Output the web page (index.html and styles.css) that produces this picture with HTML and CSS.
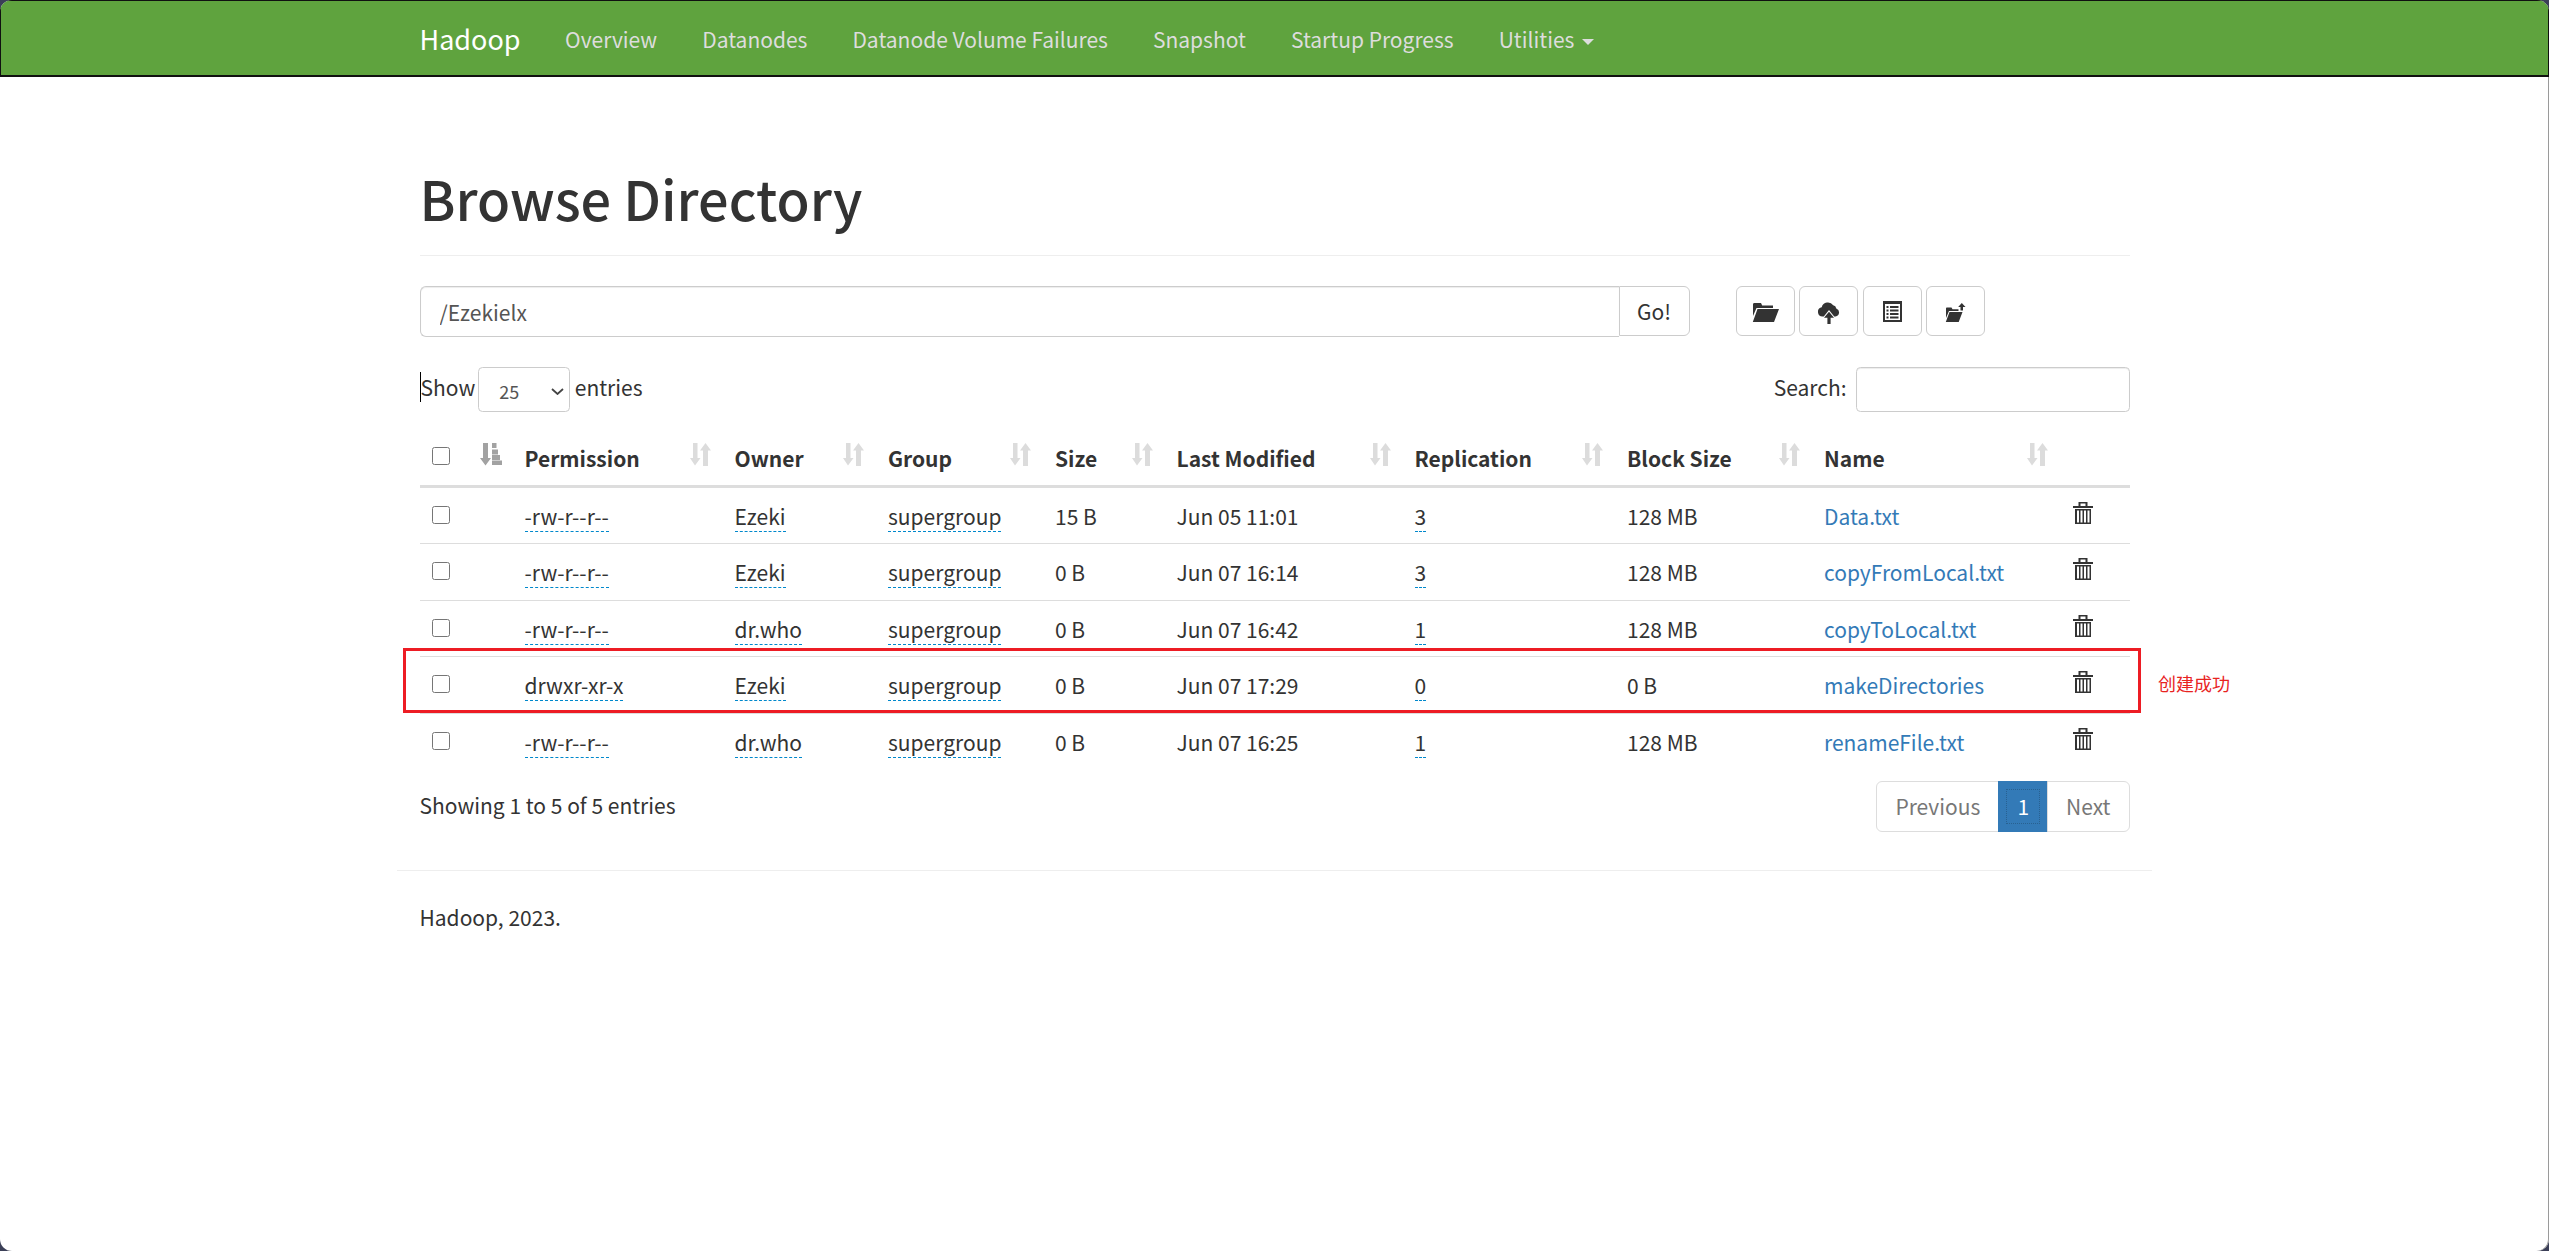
FILE: index.html
```html
<!DOCTYPE html>
<html lang="en">
<head>
<meta charset="utf-8">
<title>Browsing HDFS</title>
<link rel="stylesheet" href="styles.css">
</head>
<body>
<svg class="sprite" aria-hidden="true">
  <symbol id="i-sort" viewBox="0 0 21 23"><path d="M3 0h4.500v15h3l-5.500 7.500L0 15h3zM13 23V7.500h-3L15.500 0 21 7.500h-3V23z"/></symbol>
  <symbol id="i-sorted" viewBox="0 0 22 23"><path d="M3 0h5v15h3l-5.500 7.500L0 15h3zM12 0h4.500v5H12zM12 6.500h6v5h-6zM12 12h8v5h-8zM12 17.500h10V22H12z"/></symbol>
  <symbol id="i-trash" viewBox="0 0 20 22"><path fill-rule="evenodd" d="M5.500 0h9v4H20v2H0V4h5.500zM7.500 1.500v2.500h5V1.500zM2 7h16v15H2zM4 8.500v12h2V8.500zM7.500 8.500v12h2V8.500zM11 8.500v12h2V8.500zM14.500 8.500v12h2V8.500z"/></symbol>
</svg>

<div class="page">
  <nav class="navbar">
    <div class="nav-inner">
      <a class="brand" href="#">Hadoop</a>
      <a class="nav-link" href="#">Overview</a>
      <a class="nav-link" href="#">Datanodes</a>
      <a class="nav-link" href="#">Datanode Volume Failures</a>
      <a class="nav-link" href="#">Snapshot</a>
      <a class="nav-link" href="#">Startup Progress</a>
      <a class="nav-link" href="#">Utilities <span class="caret"></span></a>
    </div>
  </nav>

  <main class="container">
    <div class="page-header"><h1>Browse Directory</h1></div>

    <div class="path-row">
      <div class="input-group">
        <input class="path-input" type="text" value="/Ezekielx">
        <button class="go-btn" type="button">Go!</button>
      </div>
      <div class="toolbar">
        <button class="tool-btn" type="button" aria-label="Open">
          <svg class="ic-open" viewBox="0 0 27 19"><path d="M1 1.500C1 .7 1.500 0 2.300 0H9l1.200 2.500H21v2.500H4.500L1 13zM5.500 6H27l-5 13H.8z"/></svg>
        </button>
        <button class="tool-btn" type="button" aria-label="Upload">
          <svg class="ic-cloud" viewBox="0 0 22 22"><path d="M4.500 14.500A4.700 4.700 0 0 1 3.700 5.200 6.500 6.500 0 0 1 15.200 3.200 4 4 0 0 1 18.300 6.400 4.200 4.200 0 0 1 17.500 14.500h-1.300L11 8 5.800 14.500z"/><path d="M11 9.800l5 6H12.600V22H9.400v-6.200H6z"/></svg>
        </button>
        <button class="tool-btn" type="button" aria-label="List">
          <svg class="ic-list" viewBox="0 0 19 21"><path fill-rule="evenodd" d="M0 0h19v21H0zM2 3v16h15V3zM3.500 5h2v2h-2zM7 5h8.500v2H7zM3.500 8.500h2v2h-2zM7 8.500h8.500v2H7zM3.500 12h2v2h-2zM7 12h8.500v2H7zM3.500 15.500h2v2h-2zM7 15.500h8.500v2H7z"/></svg>
        </button>
        <button class="tool-btn" type="button" aria-label="Rename">
          <svg class="ic-move" viewBox="0 0 21 19"><path d="M1 5.500C1 5 1.400 4.500 2 4.500h4.500l1 1.800h6V8H4L1 15zM4.500 9H17.500l-3.800 10H.8zM15.500 7.500V4h-2.300L16.800 0l3.700 4H18v3.500z"/></svg>
        </button>
      </div>
    </div>

    <div class="table-top">
      <label class="length"><span class="show">Show</span>
        <select class="length-select"><option>25</option><option>50</option><option>100</option></select>
        <span class="label-text">entries</span></label>
      <label class="search"><span class="label-text">Search:</span> <input class="search-input" type="search"></label>
    </div>

    <div class="table-wrap">
      <table class="files">
        <colgroup>
          <col class="c-check"><col class="c-sort"><col class="c-perm"><col class="c-owner"><col class="c-group">
          <col class="c-size"><col class="c-date"><col class="c-repl"><col class="c-block"><col class="c-name"><col class="c-del">
        </colgroup>
        <thead>
          <tr>
            <th><input class="check" type="checkbox"></th>
            <th><svg class="sort-icon sort-on"><use href="#i-sorted"/></svg></th>
            <th>Permission<svg class="sort-icon"><use href="#i-sort"/></svg></th>
            <th>Owner<svg class="sort-icon"><use href="#i-sort"/></svg></th>
            <th>Group<svg class="sort-icon"><use href="#i-sort"/></svg></th>
            <th>Size<svg class="sort-icon"><use href="#i-sort"/></svg></th>
            <th>Last Modified<svg class="sort-icon"><use href="#i-sort"/></svg></th>
            <th>Replication<svg class="sort-icon"><use href="#i-sort"/></svg></th>
            <th>Block Size<svg class="sort-icon"><use href="#i-sort"/></svg></th>
            <th>Name<svg class="sort-icon"><use href="#i-sort"/></svg></th>
            <th></th>
          </tr>
        </thead>
        <tbody>
          <tr>
            <td><input class="check" type="checkbox"></td><td></td>
            <td><span class="editable">-rw-r--r--</span></td>
            <td><span class="editable">Ezeki</span></td>
            <td><span class="editable">supergroup</span></td>
            <td>15 B</td><td>Jun 05 11:01</td>
            <td><span class="editable">3</span></td>
            <td>128 MB</td>
            <td><a class="file" href="#">Data.txt</a></td>
            <td><svg class="trash"><use href="#i-trash"/></svg></td>
          </tr>
          <tr>
            <td><input class="check" type="checkbox"></td><td></td>
            <td><span class="editable">-rw-r--r--</span></td>
            <td><span class="editable">Ezeki</span></td>
            <td><span class="editable">supergroup</span></td>
            <td>0 B</td><td>Jun 07 16:14</td>
            <td><span class="editable">3</span></td>
            <td>128 MB</td>
            <td><a class="file" href="#">copyFromLocal.txt</a></td>
            <td><svg class="trash"><use href="#i-trash"/></svg></td>
          </tr>
          <tr>
            <td><input class="check" type="checkbox"></td><td></td>
            <td><span class="editable">-rw-r--r--</span></td>
            <td><span class="editable">dr.who</span></td>
            <td><span class="editable">supergroup</span></td>
            <td>0 B</td><td>Jun 07 16:42</td>
            <td><span class="editable">1</span></td>
            <td>128 MB</td>
            <td><a class="file" href="#">copyToLocal.txt</a></td>
            <td><svg class="trash"><use href="#i-trash"/></svg></td>
          </tr>
          <tr>
            <td><input class="check" type="checkbox"></td><td></td>
            <td><span class="editable">drwxr-xr-x</span></td>
            <td><span class="editable">Ezeki</span></td>
            <td><span class="editable">supergroup</span></td>
            <td>0 B</td><td>Jun 07 17:29</td>
            <td><span class="editable">0</span></td>
            <td>0 B</td>
            <td><a class="file" href="#">makeDirectories</a></td>
            <td><svg class="trash"><use href="#i-trash"/></svg></td>
          </tr>
          <tr>
            <td><input class="check" type="checkbox"></td><td></td>
            <td><span class="editable">-rw-r--r--</span></td>
            <td><span class="editable">dr.who</span></td>
            <td><span class="editable">supergroup</span></td>
            <td>0 B</td><td>Jun 07 16:25</td>
            <td><span class="editable">1</span></td>
            <td>128 MB</td>
            <td><a class="file" href="#">renameFile.txt</a></td>
            <td><svg class="trash"><use href="#i-trash"/></svg></td>
          </tr>
        </tbody>
      </table>
      <div class="callout"><span class="callout-text">创建成功</span></div>
    </div>

    <div class="table-bottom">
      <div class="info">Showing 1 to 5 of 5 entries</div>
      <div class="pagination">
        <a class="page-link disabled" href="#">Previous</a>
        <a class="page-link active" href="#">1</a>
        <a class="page-link disabled" href="#">Next</a>
      </div>
    </div>

    <hr class="footer-rule">
    <footer class="footer">Hadoop, 2023.</footer>
  </main>
</div>
</body>
</html>
```

FILE: styles.css
```css
* { box-sizing: border-box; }

html, body { margin: 0; height: 100%; }

body {
  background: #3b3f57;
  color: #333;
  font-family: "Noto Sans CJK SC", "Noto Sans", sans-serif;
  font-size: 21px;
  line-height: 30px;
}

a { text-decoration: none; }

.sprite { position: absolute; width: 0; height: 0; }

.page {
  height: 1251px;
  background: #fff;
  border-radius: 12px;
  box-shadow: inset -1px 0 0 #9a9a9a;
  overflow: hidden;
}

/* Navbar */
.navbar {
  height: 77px;
  padding-top: 1px;
  background: #5fa33e;
  border: 1px solid #101010;
  border-bottom-width: 2px;
}

.nav-inner {
  width: 1755px;
  margin: 0 auto;
  padding: 0 22.5px;
  height: 100%;
  display: flex;
  align-items: center;
}

.brand {
  color: #fff;
  font-size: 27px;
  line-height: 30px;
  margin-right: 22px;
}

.nav-link {
  color: #ddd;
  padding: 0 22.5px;
}

.caret {
  display: inline-block;
  width: 0;
  height: 0;
  margin-left: 3px;
  vertical-align: middle;
  border-top: 6px solid #ddd;
  border-left: 6px solid transparent;
  border-right: 6px solid transparent;
}

/* Main */
.container {
  width: 1755px;
  margin: 0 auto;
  padding: 0 22.5px;
}

.page-header {
  margin: 90.5px 0 30px;
  padding-bottom: 27.5px;
  border-bottom: 1px solid #eee;
}

h1 {
  margin: 0;
  font-size: 54px;
  font-weight: 500;
  line-height: 60px;
}

.path-row {
  display: flex;
  align-items: flex-start;
  margin-bottom: 30px;
}

.input-group {
  display: flex;
  width: 1270px;
  height: 51px;
}

.path-input {
  flex: 1;
  min-width: 0;
  height: 100%;
  padding: 0 19px;
  font: inherit;
  color: #555;
  border: 1px solid #ccc;
  border-right: 0;
  border-radius: 6px 0 0 6px;
  box-shadow: inset 0 1px 1px rgba(0, 0, 0, .075);
  outline: none;
}

.go-btn {
  width: 71px;
  height: 50px;
  padding: 0;
  font: inherit;
  color: #333;
  background: #fff;
  border: 1px solid #ccc;
  border-radius: 0 6px 6px 0;
}

.toolbar {
  display: flex;
  gap: 4.500px;
  margin-left: 46px;
}

.tool-btn {
  display: flex;
  align-items: center;
  justify-content: center;
  width: 59px;
  height: 50px;
  padding: 0;
  background: #fff;
  border: 1px solid #ccc;
  border-radius: 6px;
}

.tool-btn svg { fill: #333; display: block; }

.ic-open { width: 27px; height: 19px; margin-top: 2px; }
.ic-cloud { width: 22px; height: 22px; margin-top: 3px; }
.ic-list { width: 19px; height: 21px; }
.ic-move { width: 21px; height: 19px; margin-top: 3px; }

.table-top {
  display: flex;
  justify-content: space-between;
  align-items: center;
  height: 45px;
  margin-bottom: 19px;
}

.length, .search {
  display: flex;
  align-items: center;
  font-weight: 400;
}

.label-text { margin-bottom: 6px; }

.show {
  border-left: 1px solid #000;
  margin: 0 3px 6px 0;
}

.length-select {
  appearance: none;
  width: 91.500px;
  height: 45px;
  margin-right: 5px;
  padding: 3px 0 0 20px;
  font: inherit;
  font-size: 18px;
  color: #555;
  background: #fff url("data:image/svg+xml,%3Csvg xmlns='http://www.w3.org/2000/svg' width='13' height='7'%3E%3Cpath d='M1 1l5.500 5L12 1' fill='none' stroke='%23444' stroke-width='1.800'/%3E%3C/svg%3E") no-repeat 72px 20px;
  border: 1px solid #ccc;
  border-radius: 4.500px;
}

.search-input {
  width: 274px;
  height: 45px;
  margin-left: 9px;
  border: 1px solid #ccc;
  border-radius: 4.500px;
  box-shadow: inset 0 1px 1px rgba(0, 0, 0, .075);
}

/* Table */
.table-wrap { position: relative; }

.files {
  width: 1710px;
  table-layout: fixed;
  border-collapse: separate;
  border-spacing: 0;
}

.c-check { width: 48px; }
.c-sort { width: 45px; }
.c-perm { width: 210px; }
.c-owner { width: 153.500px; }
.c-group { width: 167px; }
.c-size { width: 121.500px; }
.c-date { width: 238px; }
.c-repl { width: 212.500px; }
.c-block { width: 197px; }
.c-name { width: 247.500px; }
.c-del { width: 70px; }

.files th {
  position: relative;
  height: 56px;
  padding: 12px;
  text-align: left;
  vertical-align: top;
  font-weight: 700;
  border-bottom: 3px solid #ddd;
}

.files td {
  height: 56.500px;
  padding: 13px 12px 0;
  vertical-align: top;
}

.files tbody tr:first-child td { height: 55px; }

.files tbody tr + tr td { border-top: 1px solid #ddd; }

.check {
  display: block;
  width: 18px;
  height: 18px;
  margin: 4px 0 0;
}

.files td .check { margin-top: 5px; }

.sort-icon {
  position: absolute;
  top: 12px;
  right: 12px;
  width: 21px;
  height: 23px;
  fill: #dcdcdc;
}

.sort-on {
  right: auto;
  left: 12px;
  width: 22px;
  fill: #a2a2a2;
}

.editable { border-bottom: 1px dashed #08c; }

.file { color: #337ab7; }

.trash {
  display: block;
  width: 20px;
  height: 22px;
  margin: 1px 0 0 1px;
  fill: #333;
}

.callout {
  position: absolute;
  top: 217px;
  left: -16.5px;
  width: 1738px;
  height: 65px;
  border: 3px solid #ed1c24;
}

.callout-text {
  position: absolute;
  top: 17px;
  left: calc(100% + 20px);
  font-size: 18px;
  font-weight: 400;
  line-height: 30px;
  color: #e8231f;
  white-space: nowrap;
}

.table-bottom {
  display: flex;
  justify-content: space-between;
  align-items: center;
  margin-top: 12px;
}

.info { margin-bottom: 3px; }

.pagination { display: flex; }

.page-link {
  padding: 9px 18px 10px;
  line-height: 30px;
  border: 1px solid #ddd;
  margin-left: -1px;
  background: #fff;
}

.page-link.disabled { color: #777; }
.page-link:first-child { border-radius: 6px 0 0 6px; margin-left: 0; }
.page-link:last-child { border-radius: 0 6px 6px 0; }

.page-link.active {
  color: #fff;
  background: #337ab7;
  border-color: #337ab7;
  outline: 1px dotted rgba(0, 0, 0, .2);
  outline-offset: -9px;
}

.footer-rule {
  margin: 38px -22.5px 31px;
  border: 0;
  border-top: 1px solid #eee;
}
```
